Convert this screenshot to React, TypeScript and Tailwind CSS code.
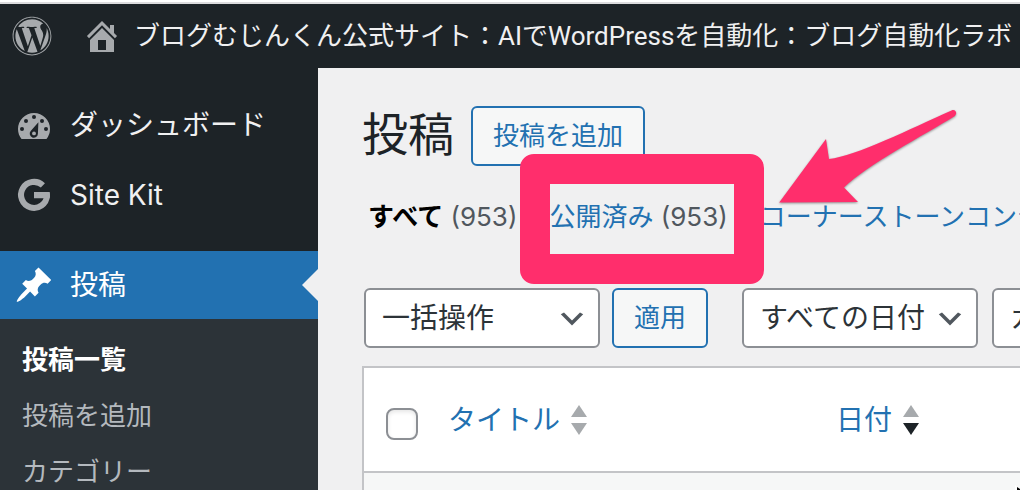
import React from 'react';
import { FaWordpress } from 'react-icons/fa';

interface IconProps {
  className?: string;
}

const HomeIcon: React.FC<IconProps> = ({ className }) => (
  <svg viewBox="0 0 20 20" fill="currentColor" className={className} aria-hidden="true">
    <path
      fillRule="evenodd"
      d="M16 8.5l1.53 1.53-1.06 1.06L10 4.6l-6.47 6.49-1.06-1.06L10 2.5l4 4v-2h2v4zm-6-2.46l6 5.99V18H4v-5.97zM12 17v-5H8v5h4z"
    />
  </svg>
);

const DashboardIcon: React.FC<IconProps> = ({ className }) => (
  <svg viewBox="0 0 20 20" className={className} aria-hidden="true">
    <path fill="currentColor" d="M3.76 17h12.48A7.95 7.95 0 0 0 18 12a8 8 0 0 0-16 0c0 1.89.66 3.63 1.76 5z" />
    <g fill="#1d2327">
      <circle cx="10" cy="6" r="1" />
      <circle cx="6" cy="8" r="1" />
      <circle cx="14" cy="8" r="1" />
      <circle cx="4" cy="12" r="1" />
      <circle cx="16" cy="12" r="1" />
      <path d="M12.2 8.6l-.25 5.75a2.05 2.05 0 1 1-3.6-1.4z" />
    </g>
    <circle cx="10" cy="14.2" r=".95" fill="currentColor" />
  </svg>
);

const GoogleIcon: React.FC<IconProps> = ({ className }) => (
  <svg viewBox="0 0 40 40" className={className} aria-hidden="true">
    <path d="M28.9 10.4A13 13 0 1 0 33 20.600" fill="none" stroke="currentColor" strokeWidth="6" />
    <path fill="currentColor" d="M20 17h15.7c.4 2 .4 4.200-.1 6.300H20z" />
  </svg>
);

const PinIcon: React.FC<IconProps> = ({ className }) => (
  <svg viewBox="0 0 20 20" fill="currentColor" className={className} aria-hidden="true">
    <path d="M10.44 3.02l1.82-1.82 6.36 6.35-1.83 1.82c-1.05-.68-2.48-.57-3.41.36l-.75.75c-.92.93-1.04 2.35-.35 3.41l-1.83 1.82-2.41-2.41-2.8 2.79c-.42.42-3.38 2.71-3.8 2.29s1.86-3.39 2.28-3.81l2.79-2.79L4.1 9.36l1.83-1.82c1.05.69 2.48.57 3.4-.36l.75-.75c.93-.92 1.05-2.35.36-3.41z" />
  </svg>
);

interface SortArrowsProps {
  desc?: boolean;
}

const SortArrows: React.FC<SortArrowsProps> = ({ desc }) => (
  <svg viewBox="0 0 16 30" className="h-[30px] w-4" aria-hidden="true">
    <path d="M8 0l8 12H0z" fill="#a7aaad" />
    <path d="M0 18h16L8 30z" fill={desc ? '#1d2327' : '#a7aaad'} />
  </svg>
);

interface FilterSelectProps {
  label: string;
  options: string[];
}

const FilterSelect: React.FC<FilterSelectProps> = ({ label, options }) => (
  <div className="relative shrink-0">
    <select
      aria-label={label}
      className="h-[60px] w-[236px] appearance-none rounded-md border-2 border-[#8c8f94] bg-white pl-4 pr-12 text-[28px] leading-9 text-[#2c3338]"
    >
      {options.map((option) => (
        <option key={option}>{option}</option>
      ))}
    </select>
    <svg viewBox="0 0 20 20" className="pointer-events-none absolute right-3 top-[15px] h-8 w-8" aria-hidden="true">
      <path d="M5 6l5 5 5-5 2 1-7 7-7-7 2-1z" fill="#50575e" />
    </svg>
  </div>
);

const menuItems = [
  { label: 'ダッシュボード', Icon: DashboardIcon },
  { label: 'Site Kit', Icon: GoogleIcon },
];

const subItems = ['投稿一覧', '投稿を追加', 'カテゴリー'];

export default function App() {
  return (
    <div className="flex h-screen flex-col overflow-hidden bg-[#f0f0f1] font-[Inter,'Noto_Sans_CJK_JP',sans-serif] text-[26px] leading-9">
      <header className="flex h-[68px] shrink-0 items-center border-t-2 border-white bg-[#1d2327] pt-0.5 font-[Roboto,'Noto_Sans_CJK_JP',sans-serif] text-[#f0f0f1] shadow-[inset_0_2px_0_#dcdcde]">
        <a href="#wp" aria-label="WordPress" className="ml-3 shrink-0 text-[#a7aaad]">
          <FaWordpress className="h-10 w-10" />
        </a>
        <a href="#site" className="ml-[30px] flex items-center gap-3 whitespace-nowrap">
          <HomeIcon className="h-10 w-10 text-[#a7aaad]" />
          <span>ブログむじんくん公式サイト：AIでWordPressを自動化：ブログ自動化ラボ</span>
        </a>
      </header>

      <div className="flex min-h-0 flex-1">
        <nav className="w-[318px] shrink-0 bg-[#1d2327] pt-[22px] text-[28px] text-[#f0f0f1]">
          {menuItems.map(({ label, Icon }) => (
            <a key={label} href="#menu" className="flex h-[70px] items-center gap-4 pl-3.5">
              <Icon className="h-10 w-10 text-[#a7aaad]" />
              {label}
            </a>
          ))}
          <a href="#posts" className="relative mt-[21px] flex h-[68px] items-center gap-4 bg-[#2271b1] pl-3.5 text-white">
            <PinIcon className="h-10 w-10" />
            投稿
            <svg viewBox="0 0 16 32" className="absolute right-0 top-[18px] h-8 w-4" aria-hidden="true">
              <path d="M16 0v32L0 16z" fill="#f0f0f1" />
            </svg>
          </a>
          <ul className="h-full bg-[#2c3338] pt-[13px] text-[26px] text-[#b4b9be]">
            {subItems.map((item, i) => (
              <li key={item}>
                <a href="#sub" className={i === 0 ? 'block px-[22px] py-2.5 font-bold text-white' : 'block px-[22px] py-2.5'}>
                  {item}
                </a>
              </li>
            ))}
          </ul>
        </nav>

        <main className="relative min-w-0 flex-1 overflow-hidden pl-11 pt-[38px]">
          <div className="flex items-start gap-[17px]">
            <h1 className="text-[46px] leading-[56px] text-[#1d2327]">投稿</h1>
            <button className="h-[60px] rounded-md border-2 border-[#2271b1] bg-[#f6f7f7] px-5 text-[#2271b1]">投稿を追加</button>
          </div>

          <ul className="mt-[33px] flex gap-8 whitespace-nowrap pl-1.5 text-[#50575e]">
            <li>
              <a href="#all" className="font-bold text-black">すべて</a> (953)
            </li>
            <li>
              <a href="#published" className="text-[#2271b1]">公開済み</a> (953)
            </li>
            <li>
              <a href="#cornerstone" className="text-[#2271b1]">コーナーストーンコンテンツ</a>
            </li>
          </ul>

          <div className="mt-[53px] flex pl-0.5">
            <FilterSelect label="一括操作を選択" options={['一括操作', '編集', 'ゴミ箱へ移動']} />
            <button className="ml-3 mr-[34px] h-[60px] shrink-0 rounded-md border-2 border-[#2271b1] bg-[#f6f7f7] px-5 text-[#2271b1]">
              適用
            </button>
            <div className="flex gap-3.5">
              <FilterSelect label="日付で絞り込む" options={['すべての日付']} />
              <FilterSelect label="カテゴリーで絞り込む" options={['カテゴリー一覧']} />
            </div>
          </div>

          <table className="mt-[18px] w-full min-w-[760px] table-fixed border-collapse border-2 border-[#c3c4c7] bg-white text-left text-[28px]">
            <thead>
              <tr className="h-[105px] border-b-2 border-[#c3c4c7]">
                <th className="w-[85px] pl-[22px]">
                  <input
                    type="checkbox"
                    aria-label="すべて選択"
                    className="mt-2 block h-8 w-8 appearance-none rounded-lg border-2 border-[#8c8f94] bg-white shadow-[inset_0_2px_4px_rgba(0,0,0,0.1)]"
                  />
                </th>
                <th className="w-[388px] font-normal">
                  <a href="#title" className="flex items-center gap-[11px] text-[#2271b1]">
                    タイトル <SortArrows />
                  </a>
                </th>
                <th className="font-normal">
                  <a href="#date" className="flex items-center gap-[11px] text-[#2271b1]">
                    日付 <SortArrows desc />
                  </a>
                </th>
              </tr>
            </thead>
            <tbody>
              <tr className="h-24 bg-[#f6f7f7]">
                <td colSpan={3} />
              </tr>
            </tbody>
          </table>

          {/* highlight frame and arrow over the published filter */}
          <div className="pointer-events-none absolute left-[202px] top-[86px] h-[130px] w-[244px] rounded-[14px] border-[30px] border-[#ff2e6c]" />
          <svg
            viewBox="0 0 184 100"
            className="pointer-events-none absolute left-[458px] top-[40px] h-[100px] w-[184px] drop-shadow-[0_1px_1px_rgba(0,0,0,0.4)]"
            aria-hidden="true"
          >
            <path
              d="M3.200 94.500L50 31l3 20C80 48 134 21 175.500 2.500c4-2 6.500 3 3 5.700C148 27 91 57 68 79.500L82 94z"
              fill="#ff2e6c"
            />
          </svg>

          {/* mouse pointer entering from the corner */}
          <svg viewBox="0 0 5 5" className="pointer-events-none absolute bottom-0 right-0 h-[5px] w-[5px]" aria-hidden="true">
            <path d="M0 5V0l5 4v1z" fill="#fff" />
            <path d="M2 5V2l3 2v1z" fill="#000" />
          </svg>
        </main>
      </div>
    </div>
  );
}
